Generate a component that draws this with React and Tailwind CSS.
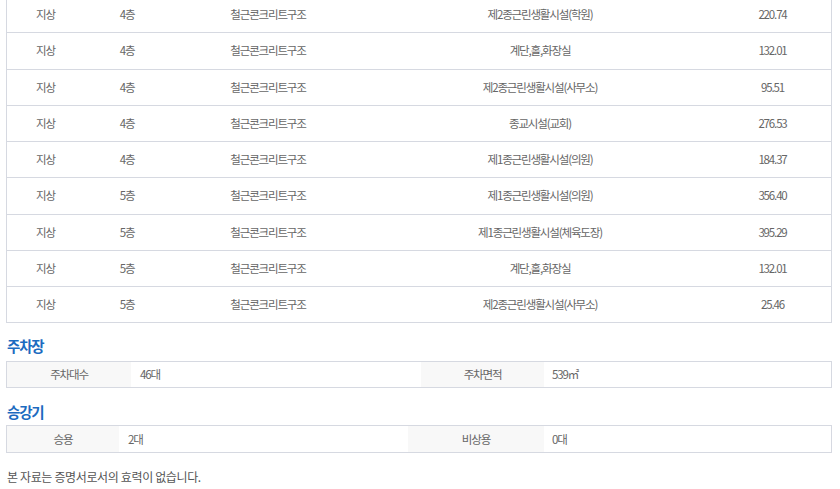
import React from "react";

const rows = [
  ["지상", "4층", "철근콘크리트구조", "제2종근린생활시설(학원)", "220.74"],
  ["지상", "4층", "철근콘크리트구조", "계단,홀,화장실", "132.01"],
  ["지상", "4층", "철근콘크리트구조", "제2종근린생활시설(사무소)", "95.51"],
  ["지상", "4층", "철근콘크리트구조", "종교시설(교회)", "276.53"],
  ["지상", "4층", "철근콘크리트구조", "제1종근린생활시설(의원)", "184.37"],
  ["지상", "5층", "철근콘크리트구조", "제1종근린생활시설(의원)", "356.40"],
  ["지상", "5층", "철근콘크리트구조", "제1종근린생활시설(체육도장)", "395.29"],
  ["지상", "5층", "철근콘크리트구조", "계단,홀,화장실", "132.01"],
  ["지상", "5층", "철근콘크리트구조", "제2종근린생활시설(사무소)", "25.46"],
];

const font = { fontFamily: '"Noto Sans CJK KR", "Noto Sans", sans-serif' };

export default function App() {
  return (
    <div className="w-[840px] h-[489px] overflow-hidden bg-white text-[#666] text-[11.5px] tracking-[-0.1em]" style={font}>
      <div className="ml-[6px] w-[826px] -mt-[3px] border-x border-[#d6d9e1]">
        {rows.map((r, i) => (
          <div key={i} className="flex h-[36.25px] items-center border-b border-[#d6d9e1]">
            <div className="w-[77px] text-center">{r[0]}</div>
            <div className="w-[86px] text-center">{r[1]}</div>
            <div className="w-[196px] text-center">{r[2]}</div>
            <div className="w-[348px] text-center">{r[3]}</div>
            <div className="w-[117px] text-center">{r[4]}</div>
          </div>
        ))}
      </div>

      <h2 className="ml-[7px] mt-[13px] h-[20px] leading-[20px] text-[14.5px] font-bold text-[#1c6bc0] tracking-[-0.08em]">주차장</h2>
      <div className="ml-[6px] mt-[5px] w-[826px] h-[27px] flex border border-[#d6d9e1]">
        <div className="w-[124px] bg-[#f8f8f8] flex items-center justify-center">주차대수</div>
        <div className="w-[290px] flex items-center pl-[9px]">46대</div>
        <div className="w-[123px] bg-[#f8f8f8] flex items-center justify-center">주차면적</div>
        <div className="flex-1 flex items-center pl-[8px]">539㎡</div>
      </div>

      <h2 className="ml-[7px] mt-[14px] h-[20px] leading-[20px] text-[14.5px] font-bold text-[#1c6bc0] tracking-[-0.08em]">승강기</h2>
      <div className="ml-[6px] mt-[3px] w-[826px] h-[28px] flex border border-[#d6d9e1]">
        <div className="w-[112px] bg-[#f8f8f8] flex items-center justify-center">승용</div>
        <div className="w-[289px] flex items-center pl-[9px]">2대</div>
        <div className="w-[136px] bg-[#f8f8f8] flex items-center justify-center">비상용</div>
        <div className="flex-1 flex items-center pl-[8px]">0대</div>
      </div>

      <p className="ml-[7px] mt-[15px] leading-[18px] text-[12px] tracking-[-0.03em] text-[#555]">본 자료는 증명서로서의 효력이 없습니다.</p>
    </div>
  );
}
